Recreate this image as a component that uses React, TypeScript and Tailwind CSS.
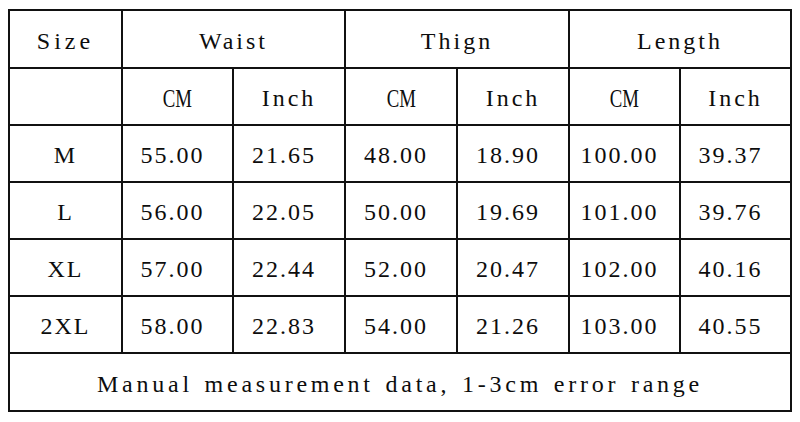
import React from "react";

const rows = [
  ["M", "55.00", "21.65", "48.00", "18.90", "100.00", "39.37"],
  ["L", "56.00", "22.05", "50.00", "19.69", "101.00", "39.76"],
  ["XL", "57.00", "22.44", "52.00", "20.47", "102.00", "40.16"],
  ["2XL", "58.00", "22.83", "54.00", "21.26", "103.00", "40.55"],
];

const cell = "border-2 border-[#111] text-center align-middle p-0 pt-[3px]";

function Cm() {
  return <span className="inline-block scale-x-75 text-[25px] tracking-normal">CM</span>;
}

export default function App() {
  return (
    <div className="w-[800px] h-[422px] bg-white pt-[9px] pl-[8px]">
      <table
        className="table-fixed border-collapse w-[782px] text-[#0d0d0d] text-[24px] leading-none tracking-[3px]"
        style={{ fontFamily: '"Liberation Serif", "Times New Roman", serif' }}
      >
        <colgroup>
          <col className="w-[113px]" />
          <col className="w-[111px]" />
          <col className="w-[112px]" />
          <col className="w-[112px]" />
          <col className="w-[112px]" />
          <col className="w-[111px]" />
          <col className="w-[111px]" />
        </colgroup>
        <tbody>
          <tr className="h-[58px]">
            <td className={cell + " tracking-[4px]"}>Size</td>
            <td className={cell} colSpan={2}>Waist</td>
            <td className={cell} colSpan={2}>Thign</td>
            <td className={cell} colSpan={2}>Length</td>
          </tr>
          <tr className="h-[57px]">
            <td className={cell}></td>
            <td className={cell}><Cm /></td>
            <td className={cell}>Inch</td>
            <td className={cell}><Cm /></td>
            <td className={cell}>Inch</td>
            <td className={cell}><Cm /></td>
            <td className={cell}>Inch</td>
          </tr>
          {rows.map((r) => (
            <tr key={r[0]} className="h-[57px]">
              {r.map((v, i) => (
                <td key={i} className={cell + (i === 0 ? " tracking-[2px]" : " tracking-[2px] pr-[10px]")}>
                  {v}
                </td>
              ))}
            </tr>
          ))}
          <tr className="h-[58px]">
            <td className={cell + " tracking-[3.75px] [word-spacing:2px]"} colSpan={7}>
              Manual measurement data, 1-3cm error range
            </td>
          </tr>
        </tbody>
      </table>
    </div>
  );
}
